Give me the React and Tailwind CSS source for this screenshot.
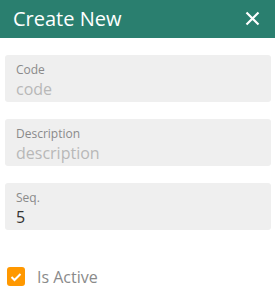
export default function App() {
  const font = { fontFamily: '"Open Sans", "Noto Sans", sans-serif' };
  const Field = ({ label, value, placeholder }) => (
    <div className="h-[47px] rounded-[3px] bg-[#efefef] pl-[11px] pt-[7px]">
      <div className="text-[12px] leading-[16px] text-[#8a8a8a]">{label}</div>
      <div className={`text-[16px] leading-[22px] ${value ? "text-[#333]" : "text-[#b8b8b8]"}`}>
        {value || placeholder}
      </div>
    </div>
  );
  return (
    <div className="w-[275px] h-[300px] bg-white overflow-hidden" style={font}>
      <div className="h-[38px] bg-[#2a7f6f] flex items-center justify-between pl-[13px] pr-[15px]">
        <span className="text-white text-[20px] leading-none">Create New</span>
        <svg width="15" height="15" viewBox="0 0 15 15" className="mt-[-1px]">
          <path d="M1.5 1.5 L13.5 13.5 M13.5 1.5 L1.5 13.5" stroke="white" strokeWidth="2.2" strokeLinecap="butt" />
        </svg>
      </div>
      <div className="pl-[5px] pr-[4px] pt-[17px] flex flex-col gap-[17px]">
        <Field label="Code" placeholder="code" />
        <Field label="Description" placeholder="description" />
        <Field label="Seq." value="5" />
      </div>
      <div className="flex items-center pl-[7px] mt-[37px]">
        <div className="w-[18px] h-[19px] rounded-[3px] bg-[#ff9800] flex items-center justify-center">
          <svg width="12" height="10" viewBox="0 0 12 10">
            <path d="M1.5 5 L4.5 8 L10.5 2" fill="none" stroke="white" strokeWidth="2" />
          </svg>
        </div>
        <span className="ml-[12px] text-[16px] text-[#8a8a8a] leading-none">Is Active</span>
      </div>
    </div>
  );
}
